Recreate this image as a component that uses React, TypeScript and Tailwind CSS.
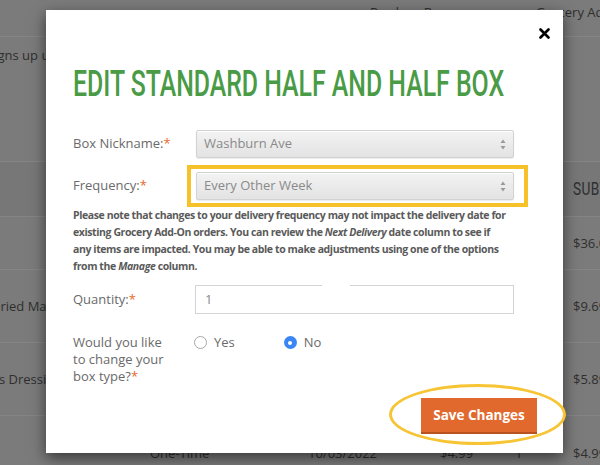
import React from 'react';

const SANS = { fontFamily: "'Open Sans', 'Liberation Sans', sans-serif" };
const TITLE = { fontFamily: "Roboto, 'Liberation Sans', Arial, sans-serif" };

function Req() {
  return <span className="text-[#e8692c]">*</span>;
}

function SelectBox({ value }: { value: string }) {
  return (
    <div className="flex-1 h-[28px] flex items-center justify-between pl-[7px] pr-[7px] border border-[#d2d2d2] rounded-[2px] bg-gradient-to-b from-[#f3f3f3] to-[#e3e3e3] shadow-[inset_0_1px_0_rgba(255,255,255,0.8),0_1px_1px_rgba(0,0,0,0.08)] text-[13px] text-[#8a8a8a]">
      <span>{value}</span>
      <svg width="6" height="11" viewBox="0 0 6 11" className="text-[#9a9a9a]">
        <path d="M3 0.5 L5.5 4 L0.5 4 Z" fill="currentColor" />
        <path d="M3 10.5 L5.5 7 L0.5 7 Z" fill="currentColor" />
      </svg>
    </div>
  );
}

function Radio({ checked, label }: { checked?: boolean; label: string }) {
  return (
    <label className="flex items-center gap-[7px] h-[17px]">
      {checked ? (
        <span className="w-[13px] h-[13px] rounded-full bg-[#3b86f5] flex items-center justify-center">
          <span className="w-[4px] h-[4px] rounded-full bg-white" />
        </span>
      ) : (
        <span className="w-[13px] h-[13px] rounded-full border border-[#a9a9a9] bg-white" />
      )}
      <span>{label}</span>
    </label>
  );
}

export default function App() {
  return (
    <div className="relative w-[600px] h-[465px] overflow-hidden bg-[#7b7b7b] text-[#2f2f2f]" style={SANS}>
      {/* page behind the overlay */}
      <div className="flex flex-col text-[13px] leading-[20px] whitespace-nowrap">
        <div className="h-[37px] border-b border-[#858585] flex pt-[2px]">
          <span className="shrink-0 ml-[370px] w-[166px]">Produce Boxes</span>
          <span className="shrink-0">Grocery Add-Ons</span>
        </div>
        <div className="h-[125px] border-b border-[#858585] pt-[8px]">
          <span className="ml-[-12px]">signs up using your link</span>
        </div>
        <div className="h-[55px] border-b border-[#858585] bg-[#777777] flex items-center pl-[573px]">
          <span className="shrink-0 text-[19px] origin-left scale-x-[0.72] inline-block tracking-[0.5px]" style={TITLE}>SUBTOTAL</span>
        </div>
        <div className="h-[53px] border-b border-[#858585] flex items-center pl-[573px]">
          <span className="shrink-0">$36.00</span>
        </div>
        <div className="h-[73px] border-b border-[#858585] flex items-center">
          <span className="shrink-0 ml-[-9px] w-[582px]">Dried Mango Slices</span>
          <span className="shrink-0">$9.69</span>
        </div>
        <div className="h-[73px] border-b border-[#858585] flex items-center">
          <span className="shrink-0 ml-[-1px] w-[574px]">s Dressing</span>
          <span className="shrink-0">$5.89</span>
        </div>
        <div className="flex pt-[27px]">
          <span className="shrink-0 ml-[150px] w-[120px]">One-Time</span>
          <span className="shrink-0 w-[132px] ml-[38px]">10/03/2022</span>
          <span className="shrink-0 w-[75px]">$4.99</span>
          <span className="shrink-0 w-[58px]">1</span>
          <span className="shrink-0">$4.99</span>
        </div>
      </div>

      {/* modal */}
      <div className="absolute left-[46px] top-[10px] w-[517px] h-[443px] bg-white shadow-[0_5px_14px_rgba(0,0,0,0.55)] pl-[27px] pr-[26px] text-[13px] text-[#6a6a6a]">
        <svg width="11" height="11" viewBox="0 0 11 11" className="absolute top-[18px] right-[13px]">
          <path d="M1.5 1.5 L9.5 9.5 M9.5 1.5 L1.5 9.5" stroke="#000" strokeWidth="2.6" strokeLinecap="round" />
        </svg>

        <h1 className="mt-[56px] h-[36px] text-[36px] leading-[36px] font-medium text-[#4a9b46] whitespace-nowrap origin-left scale-x-[0.69]" style={TITLE}>
          EDIT STANDARD HALF AND HALF BOX
        </h1>

        <div className="mr-[23px] mt-[28px]">
          <div className="flex items-center h-[28px]">
            <div className="w-[123px]">Box Nickname:<Req /></div>
            <SelectBox value="Washburn Ave" />
          </div>
          <div className="relative flex items-center h-[28px] mt-[14px]">
            <div className="w-[123px]">Frequency:<Req /></div>
            <SelectBox value="Every Other Week" />
            <div className="absolute left-[114px] top-[-7px] w-[341px] h-[42px] border-[4px] border-[#f7c229]" />
          </div>
          <p className="mt-[7px] text-[10.5px] leading-[17px] font-bold tracking-[-0.4px] text-[#5a5a5a] whitespace-nowrap">
            Please note that changes to your delivery frequency may not impact the delivery date for
            <br />
            existing Grocery Add-On orders. You can review the <i>Next Delivery</i> date column to see if
            <br />
            any items are impacted. You may be able to make adjustments using one of the options
            <br />
            from the <i>Manage</i> column.
          </p>
          <div className="flex items-center h-[29px] mt-[10px]">
            <div className="w-[122px]">Quantity:<Req /></div>
            <div className="relative flex-1 h-[29px] border border-[#d4d4d4] flex items-center pl-[9px] text-[#8a8a8a]">
              1
              <div className="absolute left-[126px] top-[-1px] w-[28px] h-[2px] bg-white" />
            </div>
          </div>
          <div className="flex mt-[20px] leading-[17px]">
            <div className="w-[121px]">
              Would you like
              <br />
              to change your
              <br />
              box type?<Req />
            </div>
            <div className="flex gap-[49px]">
              <Radio label="Yes" />
              <Radio checked label="No" />
            </div>
          </div>
        </div>

        <div className="relative flex justify-end mt-[13px]">
          <button className="w-[116px] h-[36px] bg-[#e2692e] border-b-[2px] border-[#b8521f] text-white text-[13.5px] font-bold">
            Save Changes
          </button>
          <div className="absolute right-[-29px] top-[-14px] w-[177px] h-[61px] rounded-[50%] border-[3px] border-[#f7c433]" />
        </div>
      </div>
    </div>
  );
}
